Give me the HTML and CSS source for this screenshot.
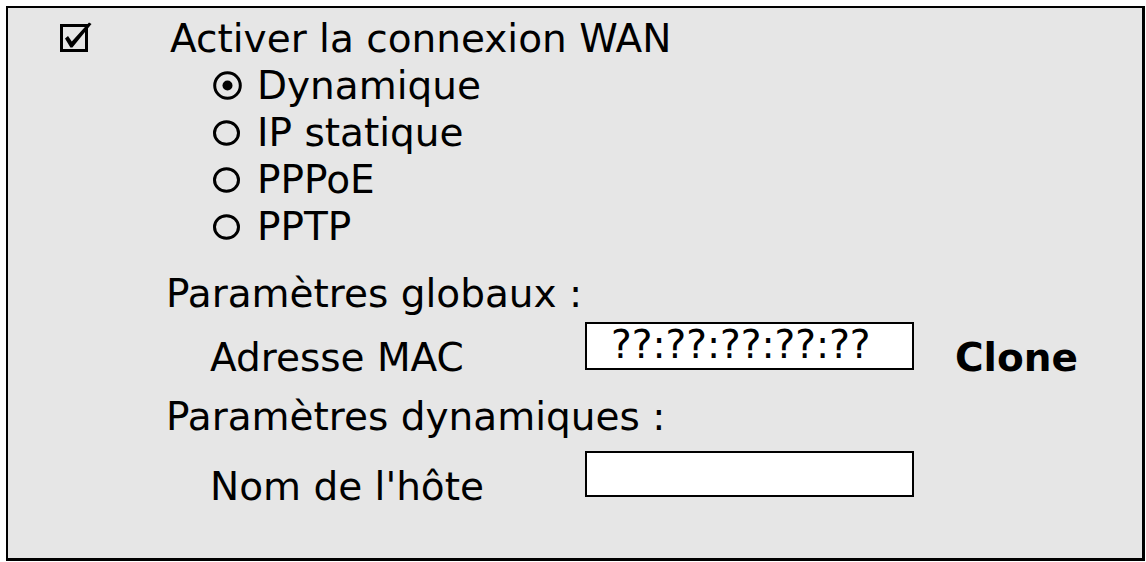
FILE: index.html
```html
<!DOCTYPE html>
<html lang="fr">
<head>
<meta charset="utf-8">
<title>Connexion WAN</title>
<link rel="stylesheet" href="styles.css">
</head>
<body>
<div class="panel">
  <div class="row row-main">
    <span class="check">
      <svg width="32" height="30" viewBox="0 0 32 30">
        <rect x="1.5" y="3.5" width="25" height="25" fill="none" stroke="#000" stroke-width="3"/>
        <polygon points="5,16.5 8,14 11.8,19.5 29,0.5 31.5,2 12.4,25.5 10.4,25.5" fill="#000"/>
      </svg>
    </span>
    <span class="text">Activer la connexion WAN</span>
  </div>
  <div class="row row-radio">
    <span class="radio">
      <svg width="29" height="29" viewBox="0 0 29 29">
        <circle cx="14.5" cy="14.5" r="12.8" fill="none" stroke="#000" stroke-width="3"/>
        <circle cx="14.5" cy="14.5" r="5" fill="#000"/>
      </svg>
    </span>
    <span class="text">Dynamique</span>
  </div>
  <div class="row row-radio">
    <span class="radio">
      <svg width="27" height="26" viewBox="0 0 27 26">
        <ellipse cx="13.5" cy="13" rx="12" ry="11.3" fill="none" stroke="#000" stroke-width="3"/>
      </svg>
    </span>
    <span class="text">IP statique</span>
  </div>
  <div class="row row-radio">
    <span class="radio">
      <svg width="27" height="26" viewBox="0 0 27 26">
        <ellipse cx="13.5" cy="13" rx="12" ry="11.3" fill="none" stroke="#000" stroke-width="3"/>
      </svg>
    </span>
    <span class="text">PPPoE</span>
  </div>
  <div class="row row-radio">
    <span class="radio">
      <svg width="27" height="26" viewBox="0 0 27 26">
        <ellipse cx="13.5" cy="13" rx="12" ry="11.3" fill="none" stroke="#000" stroke-width="3"/>
      </svg>
    </span>
    <span class="text">PPTP</span>
  </div>

  <div class="row row-section section-global">
    <span class="text">Paramètres globaux :</span>
  </div>
  <div class="row row-field field-mac">
    <span class="label">Adresse MAC</span>
    <span class="input">??:??:??:??:??</span>
    <span class="button">Clone</span>
  </div>

  <div class="row row-section section-dyn">
    <span class="text">Paramètres dynamiques :</span>
  </div>
  <div class="row row-field field-host">
    <span class="label">Nom de l'hôte</span>
    <span class="input input-empty"></span>
  </div>
</div>
</body>
</html>
```

FILE: styles.css
```css
html, body {
  margin: 0;
  padding: 0;
  background: #ffffff;
}

body {
  font-family: "DejaVu Sans", Verdana, sans-serif;
  font-size: 39px;
  color: #000;
}

.panel {
  box-sizing: border-box;
  margin: 6px 0 0 6px;
  width: 1139px;
  height: 555px;
  background: #e6e6e6;
  border-style: solid;
  border-color: #000;
  border-width: 2px 3px 3px 2px;
  padding-top: 7px;
  display: flex;
  flex-direction: column;
}

.row {
  display: flex;
  align-items: center;
  height: 47px;
  line-height: 47px;
  white-space: nowrap;
}

.row-main {
  padding-left: 52px;
}

.check {
  width: 110px;
  display: flex;
  align-items: center;
  margin-top: -4px;
}

.check svg,
.radio svg {
  display: block;
}

.row-radio {
  padding-left: 205px;
}

.radio {
  width: 44px;
  display: flex;
  align-items: center;
}

.row-section {
  padding-left: 158px;
}

.section-global {
  margin-top: 20px;
}

.section-dyn {
  margin-top: 12px;
}

.row-field {
  padding-left: 202px;
  align-items: flex-start;
  height: auto;
}

.field-mac {
  margin-top: 5px;
  height: 59px;
}

.field-host {
  margin-top: 11px;
}

.label {
  width: 375px;
  margin-top: 12px;
}

.input {
  box-sizing: border-box;
  width: 329px;
  height: 48px;
  background: #fff;
  border: 2px solid #000;
  padding-left: 24px;
  line-height: 42px;
}

.input-empty {
  height: 46px;
}

.button {
  font-weight: bold;
  margin-left: 41px;
  margin-top: 12px;
}
```
